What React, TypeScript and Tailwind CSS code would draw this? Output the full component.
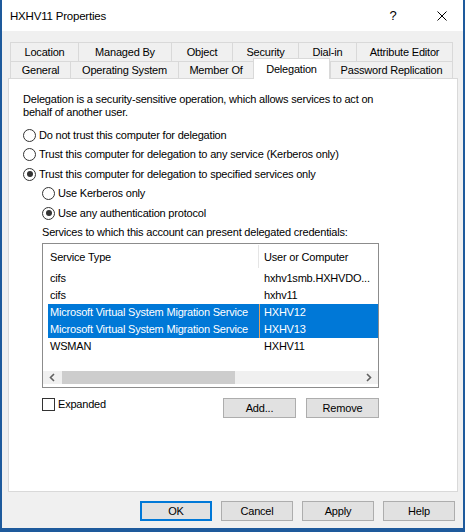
import React from "react";

const font = { fontFamily: '"Liberation Sans", Arial, sans-serif' };

function Radio({ checked, label }: { checked?: boolean; label: string }) {
  return (
    <div className="flex items-center h-[19.5px]">
      <div className="w-[13px] h-[13px] rounded-full border border-[#333333] bg-white flex items-center justify-center shrink-0">
        {checked && <div className="w-[6px] h-[6px] rounded-full bg-[#333333]" />}
      </div>
      <span className="ml-[3px] leading-[13px]">{label}</span>
    </div>
  );
}

function Btn({ label, def }: { label: string; def?: boolean }) {
  return (
    <div
      className={
        "w-[72px] h-[20px] flex items-center justify-center bg-[#e1e1e1] " +
        (def ? "border-2 border-[#0078d7]" : "border border-[#adadad]")
      }
    >
      {label}
    </div>
  );
}

const row1 = [
  ["Location", 68],
  ["Managed By", 93],
  ["Object", 61],
  ["Security", 66],
  ["Dial-in", 58],
  ["Attribute Editor", 97],
] as const;

const row2 = [
  ["General", 60],
  ["Operating System", 108],
  ["Member Of", 75],
  ["Delegation", 77],
  ["Password Replication", 123],
] as const;

const rows = [
  ["cifs", "hxhv1smb.HXHVDO...", false],
  ["cifs", "hxhv11", false],
  ["Microsoft Virtual System Migration Service", "HXHV12", true],
  ["Microsoft Virtual System Migration Service", "HXHV13", true],
  ["WSMAN", "HXHV11", false],
] as const;

export default function App() {
  return (
    <div
      className="w-[465px] h-[532px] flex flex-col border-l-2 border-r-2 border-b-4 border-[#1e5a9c] bg-[#f0f0f0] text-[11px] tracking-[-0.2px] text-black overflow-hidden"
      style={font}
    >
      {/* Title bar */}
      <div className="h-[31px] bg-white flex items-center pl-[8px] shrink-0">
        <span className="leading-[14px] text-[11.5px]">HXHV11 Properties</span>
        <span className="ml-auto w-[12px] text-center text-[13px]">?</span>
        <svg className="ml-[38px] mr-[16px]" width="10" height="10" viewBox="0 0 10 10">
          <path d="M0.5 0.5 L9.5 9.5 M9.5 0.5 L0.5 9.5" stroke="#000" strokeWidth="1" fill="none" />
        </svg>
      </div>

      {/* Body */}
      <div className="flex-1 flex flex-col">
        <div className="w-[450px] ml-[6px] mt-[11px]">
          <div className="flex pl-[2px] h-[19px]">
            {row1.map(([t, w], i) => (
              <div
                key={t}
                className={
                  "h-[19px] pt-px flex items-center justify-center border-t border-l border-[#d9d9d9] " +
                  (i === row1.length - 1 ? "border-r" : "")
                }
                style={{ width: w }}
              >
                {t}
              </div>
            ))}
          </div>
          <div className="flex items-end pl-[2px] h-[17px] relative z-10">
            {row2.map(([t, w], i) =>
              t === "Delegation" ? (
                <div
                  key={t}
                  className="h-[21px] -mb-px flex items-center justify-center bg-white border-t border-l border-r border-[#d9d9d9]"
                  style={{ width: w }}
                >
                  {t}
                </div>
              ) : (
                <div
                  key={t}
                  className={
                    "h-[17px] pt-px flex items-center justify-center border-t border-l border-[#d9d9d9] " +
                    (i === row2.length - 1 ? "border-r" : "")
                  }
                  style={{ width: w }}
                >
                  {t}
                </div>
              )
            )}
          </div>
          <div className="h-[414px] border border-[#d9d9d9] bg-white pl-[14px] pt-[14px] flex flex-col">
            <div className="leading-[13px]">
              <div>Delegation is a security-sensitive operation, which allows services to act on</div>
              <div>behalf of another user.</div>
            </div>
            <div className="mt-[6.5px] flex flex-col">
              <Radio label="Do not trust this computer for delegation" />
              <Radio label="Trust this computer for delegation to any service (Kerberos only)" />
              <Radio checked label="Trust this computer for delegation to specified services only" />
              <div className="pl-[19px] flex flex-col">
                <Radio label="Use Kerberos only" />
                <Radio checked label="Use any authentication protocol" />
              </div>
            </div>
            <div className="ml-[19px] mt-[2px] leading-[14px]">
              Services to which this account can present delegated credentials:
            </div>
            {/* List view */}
            <div className="ml-[19px] mt-[4px] w-[337px] h-[145px] border border-[#8c8c8c] bg-white flex flex-col">
              <div className="h-[25.5px] flex items-center shrink-0">
                <div className="w-[216px] h-[23px] pl-[7px] flex items-center border-r border-[#e5e5e5]">
                  Service Type
                </div>
                <div className="pl-[5px]">User or Computer</div>
              </div>
              <div className="flex flex-col pl-[5px]">
                {rows.map(([a, b, sel], i) => (
                  <div
                    key={i}
                    className={
                      "h-[17px] flex items-center " + (sel ? "bg-[#0078d7] text-white" : "")
                    }
                  >
                    <div className="w-[211px] pl-[2px] whitespace-nowrap overflow-hidden">{a}</div>
                    <div
                      className={
                        "h-[17px] pl-[4px] flex items-center border-l " +
                        (sel ? "border-[#e0a060]" : "border-transparent")
                      }
                    >
                      {b}
                    </div>
                  </div>
                ))}
              </div>
              {/* Horizontal scrollbar */}
              <div className="mt-auto mb-[3px] h-[13px] bg-[#f0f0f0] flex items-center shrink-0">
                <div className="w-[18px] h-[13px] flex items-center justify-center">
                  <svg width="6" height="9" viewBox="0 0 6 9">
                    <path d="M5 1 L1.5 4.5 L5 8" stroke="#606060" strokeWidth="1.6" fill="none" />
                  </svg>
                </div>
                <div className="ml-[1px] w-[173px] h-[13px] bg-[#cdcdcd]" />
                <div className="ml-auto w-[18px] h-[13px] flex items-center justify-center">
                  <svg width="6" height="9" viewBox="0 0 6 9">
                    <path d="M1 1 L4.5 4.5 L1 8" stroke="#606060" strokeWidth="1.6" fill="none" />
                  </svg>
                </div>
              </div>
            </div>
            {/* Bottom row */}
            <div className="ml-[19px] mt-[10px] w-[337px] flex items-start">
              <div className="flex items-center h-[13px]">
                <div className="w-[13px] h-[13px] border border-[#333333] bg-white" />
                <span className="ml-[3px] leading-[13px]">Expanded</span>
              </div>
              <div className="ml-auto flex gap-[10px]">
                <div className="w-[73px] h-[20px] flex items-center justify-center bg-[#e1e1e1] border border-[#adadad]">
                  Add...
                </div>
                <div className="w-[73px] h-[20px] flex items-center justify-center bg-[#e1e1e1] border border-[#adadad]">
                  Remove
                </div>
              </div>
            </div>
          </div>
        </div>
        <div className="mt-[9px] flex justify-end pr-[8px] gap-[9px]">
          <Btn label="OK" def />
          <Btn label="Cancel" />
          <Btn label="Apply" />
          <Btn label="Help" />
        </div>
      </div>
    </div>
  );
}
